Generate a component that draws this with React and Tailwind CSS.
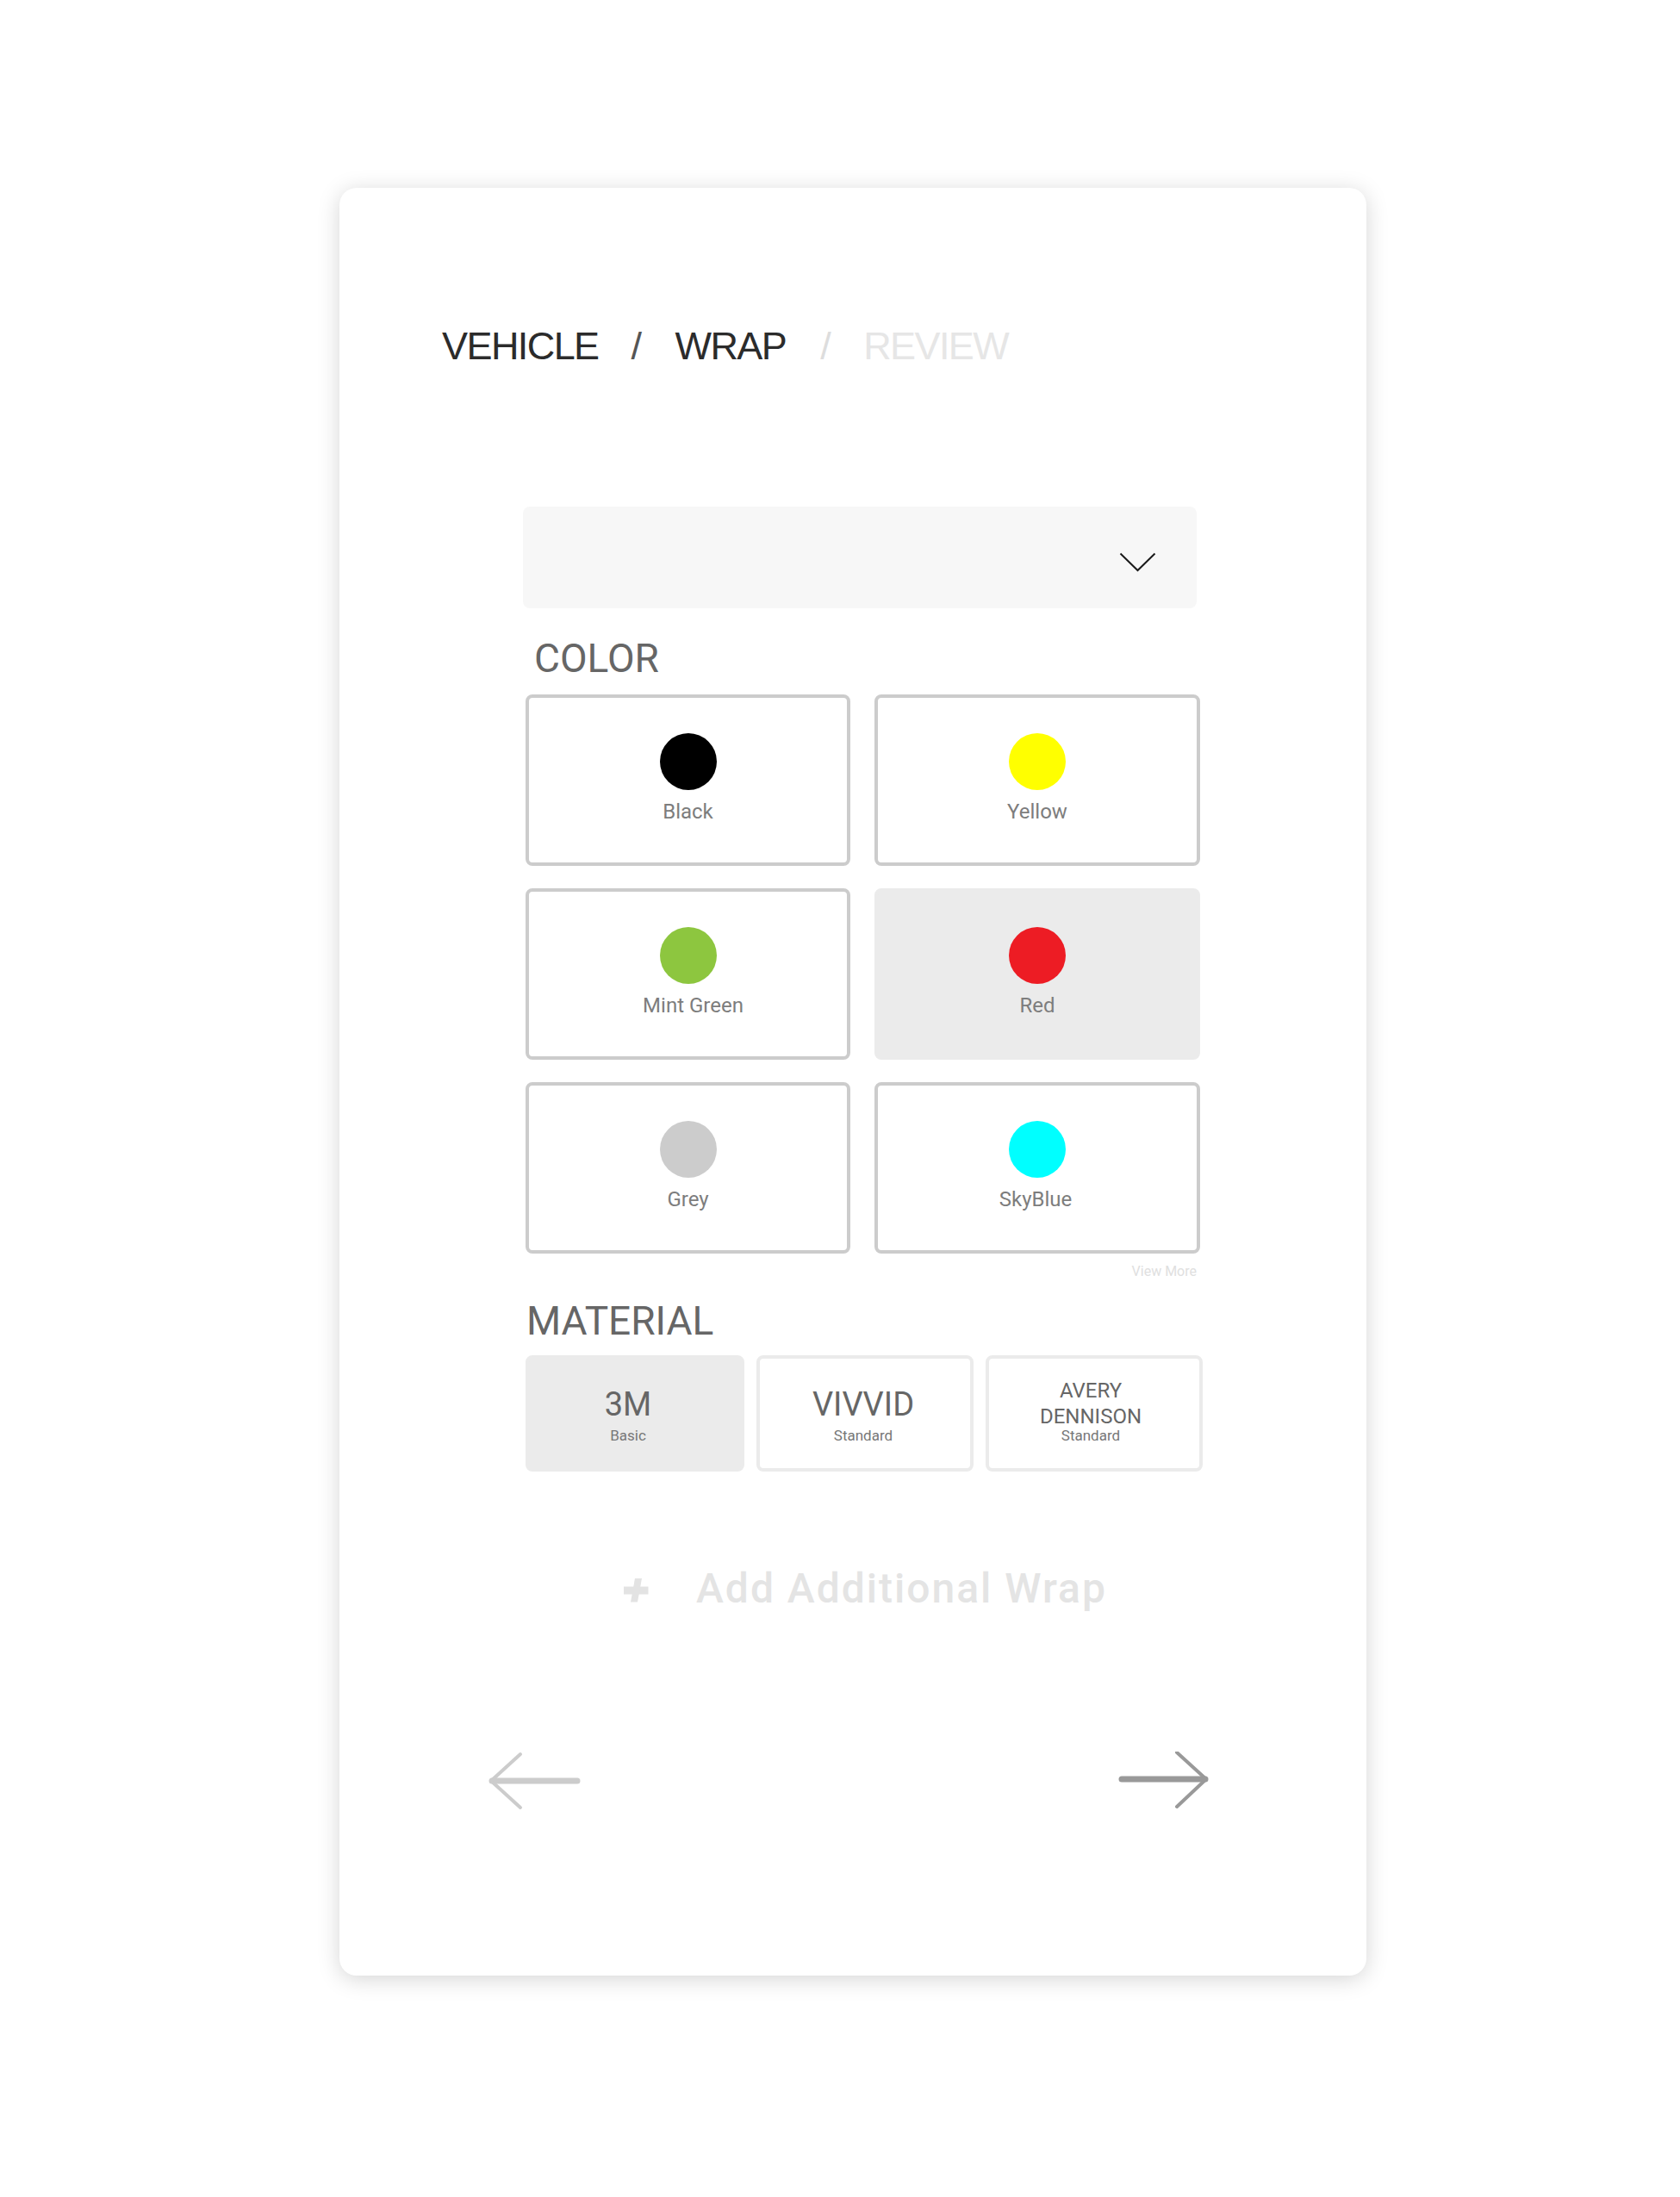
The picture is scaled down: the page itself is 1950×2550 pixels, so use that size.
export default function App() {
  const colors = [
    { name: "Black", c: "bg-[#000000]", sel: false, shift: "" },
    { name: "Yellow", c: "bg-[#ffff00]", sel: false, shift: "" },
    { name: "Mint Green", c: "bg-[#8dc63f]", sel: false, shift: "ml-[12px]" },
    { name: "Red", c: "bg-[#ed1c24]", sel: true, shift: "" },
    { name: "Grey", c: "bg-[#cccccc]", sel: false, shift: "" },
    { name: "SkyBlue", c: "bg-[#00ffff]", sel: false, shift: "ml-[-4px]" },
  ];
  return (
    <div className="min-h-[2550px] w-[1950px] bg-white pt-[218px] pl-[394px]">
      <div className="w-[1192px] h-[2075px] rounded-[20px] bg-white shadow-[0_4px_26px_rgba(0,0,0,0.17)] flex flex-col font-['Roboto',sans-serif]">
        {/* Breadcrumb */}
        <div className="mt-[161px] ml-[119px] flex items-start font-['Liberation_Sans',Arial,sans-serif] text-[45px] leading-none tracking-[-0.035em]">
          <span className="text-[#2b2b2b]">VEHICLE</span>
          <span className="ml-[38px] text-[#555555]">/</span>
          <span className="ml-[40px] text-[#2b2b2b]">WRAP</span>
          <span className="ml-[40px] text-[#dddddd]">/</span>
          <span className="ml-[39px] text-[#e6e6e6]">REVIEW</span>
        </div>

        {/* Content column */}
        <div className="ml-[213px] w-[786px] flex flex-col">
          {/* Dropdown */}
          <div className="mt-[164px] h-[118px] w-[782px] rounded-[8px] bg-[#f7f7f7] flex justify-end items-start pt-[53px] pr-[47px]">
            <svg width="43" height="23" viewBox="0 0 43 23" fill="none">
              <polyline points="1.5,1.5 21.5,21 41.5,1.5" stroke="#1a1a1a" strokeWidth="2" strokeLinejoin="miter" />
            </svg>
          </div>

          <div className="mt-[35px] ml-[13px] text-[46px] leading-none text-[#666666]">COLOR</div>

          <div className="mt-[19px] ml-[3px] grid grid-cols-[377px_378px] gap-x-[28px] gap-y-[26px]">
            {colors.map((col) => (
              <div
                key={col.name}
                className={
                  col.sel
                    ? "h-[199px] rounded-[8px] border-4 border-[#ebebeb] bg-[#ebebeb] flex flex-col items-center pt-[41px]"
                    : "h-[199px] rounded-[8px] border-4 border-[#cccccc] bg-white flex flex-col items-center pt-[41px]"
                }
              >
                <div className={"w-[66px] h-[66px] rounded-full " + col.c} />
                <div className={"mt-[13px] text-[24px] leading-none text-[#7d7d7d] " + col.shift}>{col.name}</div>
              </div>
            ))}
          </div>

          <div className="mt-[13px] w-[782px] text-right text-[16px] leading-none text-[#e0e0e0]">View More</div>

          <div className="mt-[26px] ml-[4px] text-[46px] leading-none text-[#666666]">MATERIAL</div>

          <div className="mt-[17px] ml-[3px] grid grid-cols-[254px_252px_252px] gap-x-[14px]">
            <div className="h-[135px] rounded-[8px] border-4 border-[#ebebeb] bg-[#ebebeb] flex flex-col items-center justify-end pb-[29px] pr-[16px]">
              <div className="text-[38px] leading-none text-[#666666]">3M</div>
              <div className="mt-[9px] text-[17px] leading-none text-[#777777]">Basic</div>
            </div>
            <div className="h-[135px] rounded-[8px] border-4 border-[#ebebeb] bg-white flex flex-col items-center justify-end pb-[29px] pr-[4px]">
              <div className="text-[38px] leading-none text-[#666666]">VIVVID</div>
              <div className="mt-[9px] text-[17px] leading-none text-[#777777]">Standard</div>
            </div>
            <div className="h-[135px] rounded-[8px] border-4 border-[#ebebeb] bg-white flex flex-col items-center justify-end pb-[29px] pr-[8px]">
              <div className="text-[24px] leading-[30px] text-[#666666] text-center">
                AVERY
                <br />
                DENNISON
              </div>
              <div className="mt-[-1px] text-[17px] leading-none text-[#777777]">Standard</div>
            </div>
          </div>

          {/* Add additional wrap */}
          <div className="mt-[112px] ml-[117px] flex items-center">
            <svg width="29" height="28" viewBox="0 0 29 28" className="mt-[4px]">
              <polygon points="0,9.5 28.5,9.5 28.5,18.5 0,18.5" fill="#e3e3e3" />
              <polygon points="13,0 21,0 16,27.5 8,27.5" fill="#e3e3e3" />
            </svg>
            <span className="ml-[55px] text-[48px] leading-none font-medium tracking-[2px] text-[#e4e4e4]">Add Additional Wrap</span>
          </div>
        </div>

        {/* Arrows */}
        <div className="mt-[165px] pl-[172px] pr-[182px] flex justify-between items-start">
          <svg width="112" height="68" viewBox="0 0 112 68" fill="none">
            <line x1="5" y1="34" x2="104" y2="34" stroke="#cccccc" strokeWidth="7" strokeLinecap="round" />
            <polyline points="38,3 4,34 38,65" stroke="#cccccc" strokeWidth="4" strokeLinecap="round" strokeLinejoin="round" />
          </svg>
          <svg width="108" height="68" viewBox="0 0 108 68" fill="none">
            <line x1="6" y1="32" x2="103" y2="32" stroke="#999999" strokeWidth="7" strokeLinecap="round" />
            <polyline points="70,1 104,32 70,64" stroke="#999999" strokeWidth="4" strokeLinecap="round" strokeLinejoin="round" />
          </svg>
        </div>
      </div>
    </div>
  );
}
